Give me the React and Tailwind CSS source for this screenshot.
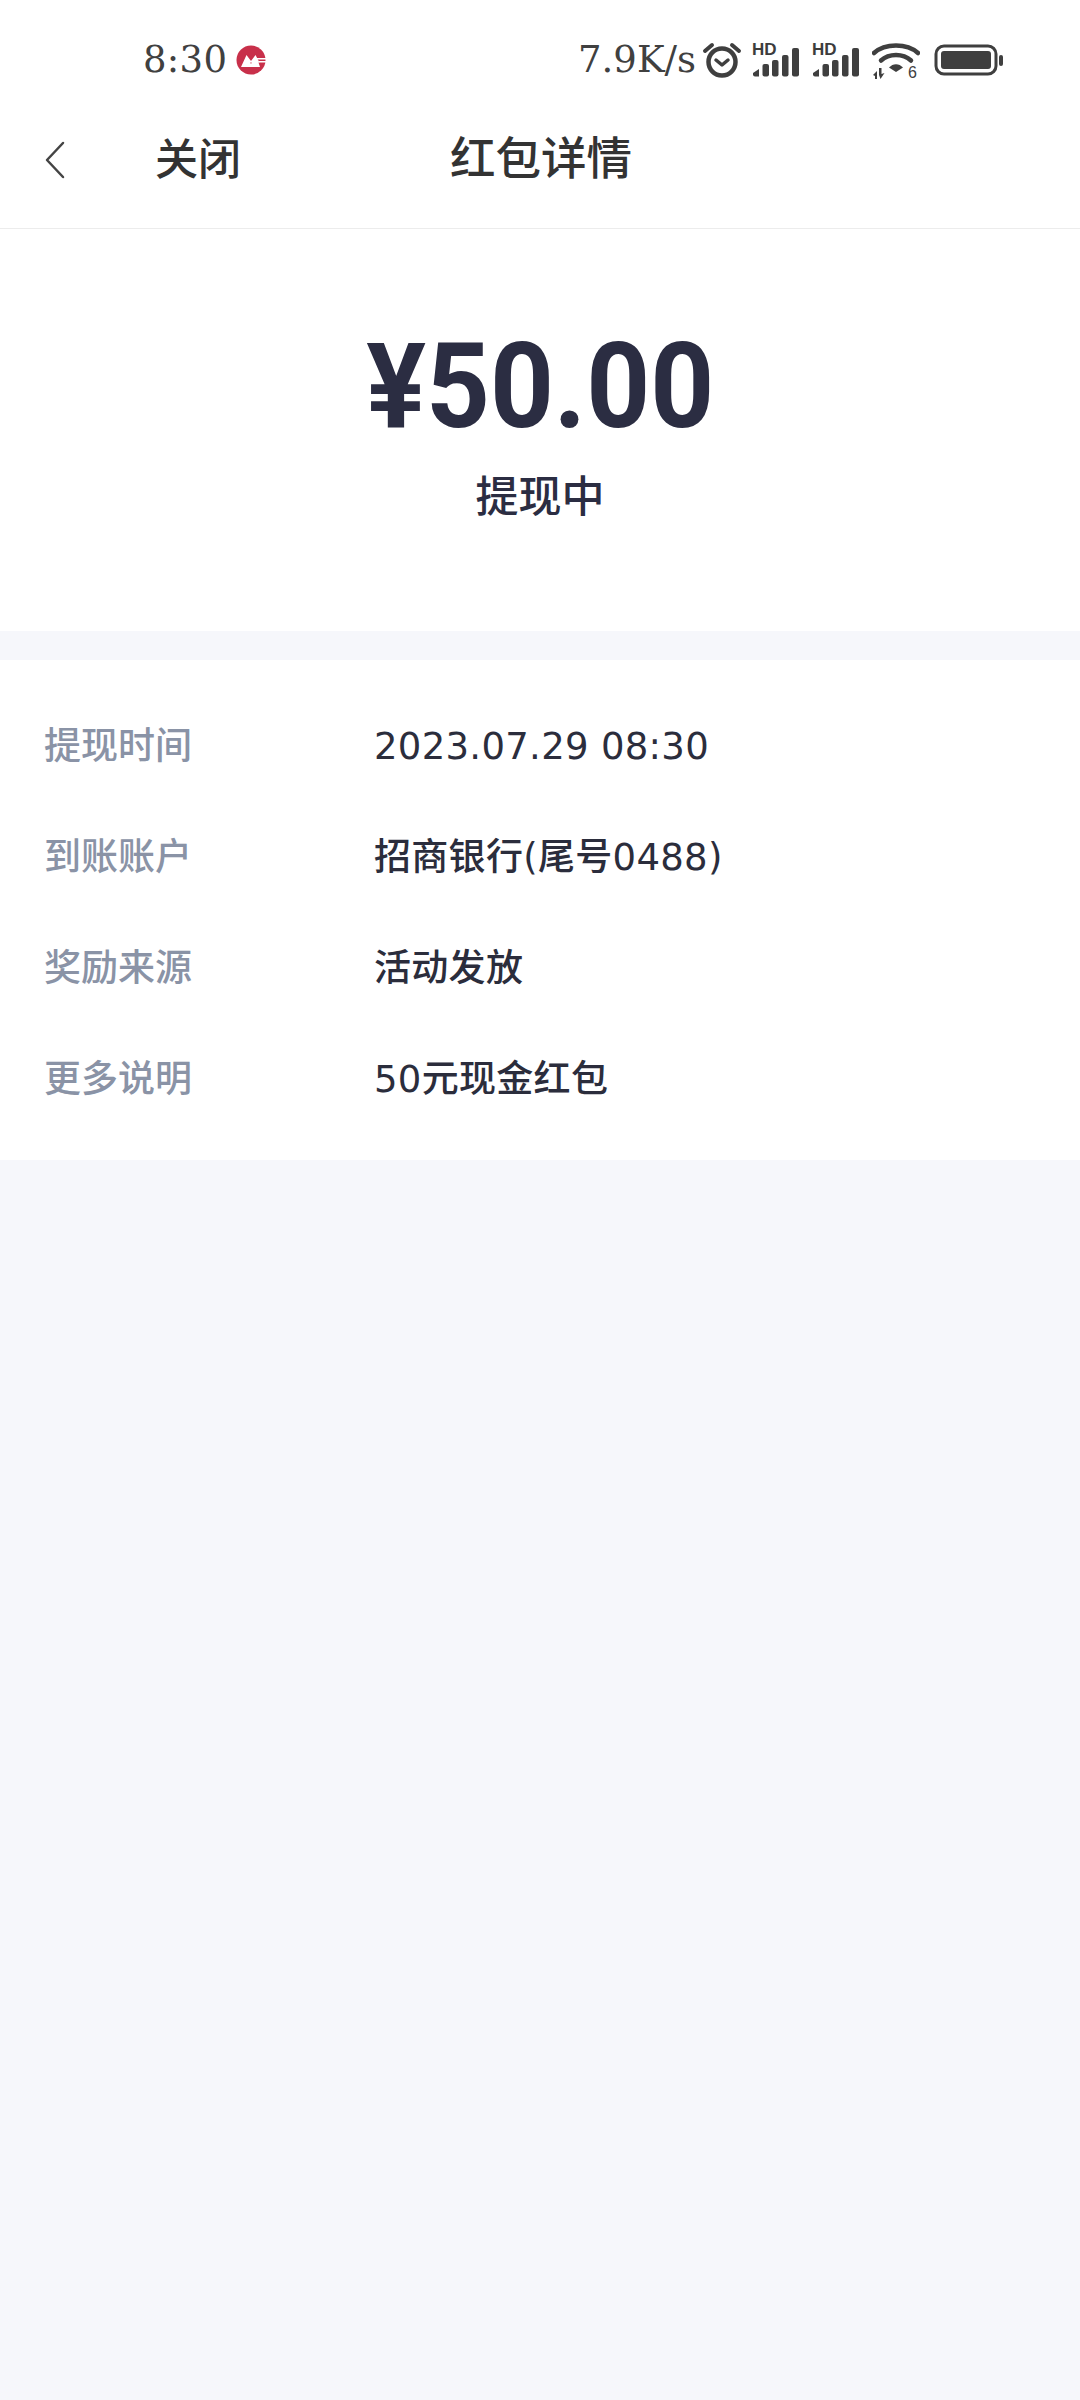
const rows = [
  ["提现时间", "2023.07.29 08:30"],
  ["到账账户", "招商银行(尾号0488)"],
  ["奖励来源", "活动发放"],
  ["更多说明", "50元现金红包"],
];

const cjk = "font-['DejaVu_Sans','Noto_Sans_CJK_SC',sans-serif] font-medium";

function Bars() {
  return (
    <div className="relative w-[50px] h-[34px]">
      <span className="absolute left-0 -top-[1px] text-[17px] leading-[15px] font-bold text-[#3c3c3c] font-['Liberation_Sans',sans-serif]">HD</span>
      <svg width="50" height="34" viewBox="0 0 50 34" fill="#3f3f3f" className="absolute left-0 top-0">
        <path d="M3 33.500a2 2 0 0 1-2-2v-1.500l6-4v7.500z" />
        <rect x="10.500" y="21" width="6.500" height="12.500" rx="2" />
        <rect x="20" y="17" width="6.500" height="16.500" rx="2" />
        <rect x="30" y="12" width="6.500" height="21.500" rx="2" />
        <rect x="40" y="5" width="7" height="28.500" rx="2" />
      </svg>
    </div>
  );
}

function Wifi() {
  return (
    <div className="relative w-[48px] h-[38px] -ml-0.5">
      <svg width="48" height="38" viewBox="0 0 48 38" fill="none">
        <path d="M2 12C13 2 35 2 46 12" stroke="#3f3f3f" strokeWidth="4.500" strokeLinecap="round" />
        <path d="M9 19.500C17 12 31 12 39 19.500" stroke="#3f3f3f" strokeWidth="4.500" strokeLinecap="round" />
        <path d="M17 26.500C21 22 27 22 31 26.500L24 31z" fill="#3f3f3f" />
        <path d="M1 34l4-4v8H3v-3zM7 27h2.500v6l3-1-4 6-1.500-4z" fill="#3f3f3f" />
      </svg>
      <span className="absolute left-[36px] top-[24px] text-[16px] leading-[16px] text-[#3f3f3f] font-['Liberation_Sans',sans-serif]">6</span>
    </div>
  );
}

export default function App() {
  return (
    <div className="w-[1080px] h-[2400px] bg-[#f6f7fb] flex flex-col">
      <div className="bg-white">
        <div className="h-[110px] flex items-center justify-between pl-[143px] pr-[76px] text-[#404040] font-['DejaVu_Serif',serif] pt-[9px]">
          <div className="flex items-center gap-[9px]">
            <span className="text-[37px] leading-none tracking-[0.3px]">8:30</span>
            <svg width="30" height="30" viewBox="0 0 30 30">
              <circle cx="15" cy="15" r="14.500" fill="#c8304a" />
              <path d="M24 22H5l5.500-12 4.500 6 4.500-6 4 7.500H7.500l3-6.500L15 19l4.500-8.500L22 16z" fill="#fff" />
              <path d="M21 13h9v1.500h-9zM23 16h7v1.500h-7z" fill="#fff" />
            </svg>
          </div>
          <div className="flex items-center">
            <span className="text-[37px] leading-none mr-[6px]">7.9K/s</span>
            <svg width="40" height="38" viewBox="0 0 40 38" fill="none" stroke="#3f3f3f" className="mr-[10px]">
              <circle cx="20" cy="21" r="13.500" strokeWidth="4.500" />
              <path d="M14 19l6 5 6-5" strokeWidth="3.500" strokeLinecap="round" strokeLinejoin="round" />
              <path d="M3 10l7-6M37 10l-7-6" strokeWidth="4" strokeLinecap="round" />
            </svg>
            <div className="mr-[10px]"><Bars /></div>
            <div className="mr-[12px]"><Bars /></div>
            <div className="mr-[14px]"><Wifi /></div>
            <svg width="70" height="32" viewBox="0 0 70 32" fill="none">
              <rect x="2" y="2" width="60" height="28" rx="8" stroke="#3f3f3f" strokeWidth="3" />
              <rect x="7" y="7" width="50" height="18" rx="3" fill="#3f3f3f" />
              <rect x="65" y="11" width="4" height="11" rx="2" fill="#3f3f3f" />
            </svg>
          </div>
        </div>
        <div className={`h-[119px] pb-[18px] border-b border-[#ececec] flex items-center text-[#333333] ${cjk}`}>
          <svg width="24" height="40" viewBox="0 0 24 40" fill="none" className="ml-[43px]">
            <path d="M20 3L4 20l16 17" stroke="#444444" strokeWidth="2.500" strokeLinecap="round" strokeLinejoin="round" />
          </svg>
          <span className="ml-[88px] text-[43px] leading-none">关闭</span>
          <span className="ml-[209px] text-[45.500px] leading-none">红包详情</span>
        </div>
      </div>
      <div className="bg-white h-[402px] flex flex-col items-center text-[#2b2d42]">
        <div className="mt-[88px] text-[118px] leading-[140px] font-bold scale-x-[0.945] font-['Roboto',sans-serif]">¥50.00</div>
        <div className={`mt-[15px] text-[43px] leading-[50px] ${cjk}`}>提现中</div>
      </div>
      <div className="mt-[29px] bg-white h-[500px] pt-[31px] flex flex-col">
        {rows.map(([k, v]) => (
          <div key={k} className={`h-[111px] flex items-center pl-[44px] text-[37px] ${cjk}`}>
            <span className="w-[330px] text-[#8a93a6]">{k}</span>
            <span className="text-[#2b2d3c] tracking-[0.3px]">{v}</span>
          </div>
        ))}
      </div>
    </div>
  );
}
